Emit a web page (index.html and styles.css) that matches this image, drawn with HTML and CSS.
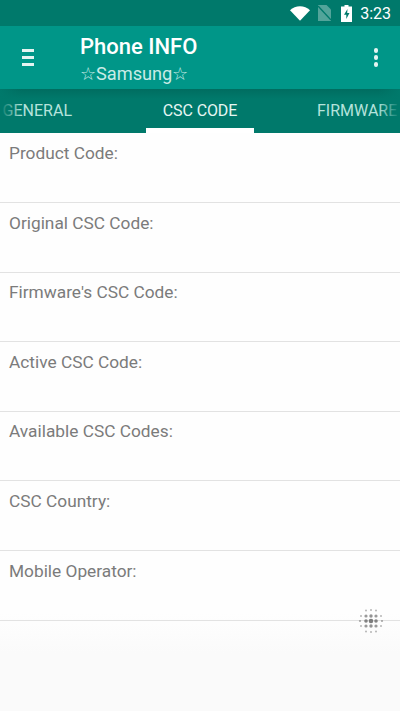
FILE: index.html
```html
<!DOCTYPE html>
<html lang="en">
<head>
  <meta charset="UTF-8">
  <meta name="viewport" content="width=device-width, initial-scale=1.0">
  <title>Phone INFO</title>
  <link rel="stylesheet" href="styles.css">
</head>
<body>
  <div class="status-bar">
    <svg class="icon-wifi" width="20" height="15" viewBox="0 0 20 15"><path d="M0 4.2C2.8 1.7 6.2.3 10 .3s7.2 1.4 10 3.9L10 14.8z" fill="#fff"/></svg>
    <svg class="icon-sim" width="13" height="16" viewBox="0 0 13 16"><path d="M0 0h8.500L13 4.500V16H0z" fill="#fff" fill-opacity=".32"/><path d="M0 1l13 14" stroke="#00796b" stroke-width="1.400"/></svg>
    <svg class="icon-battery" width="11" height="17" viewBox="0 0 11 17"><path fill-rule="evenodd" d="M3.500 0h4v1.500H11V17H0V1.500h3.500zM6.500 4L3 9.800h2.300V14L8.500 8H6.200z" fill="#fff"/></svg>
    <span class="clock">3:23</span>
  </div>

  <header class="app-bar">
    <button class="menu-btn" aria-label="Menu">
      <span></span><span></span><span></span>
    </button>
    <div class="titles">
      <h1>Phone INFO</h1>
      <p>☆Samsung☆</p>
    </div>
    <button class="more-btn" aria-label="More">
      <span></span><span></span><span></span>
    </button>
  </header>

  <nav class="tabs">
    <div class="tab tab-left">GENERAL</div>
    <div class="tab tab-active">CSC CODE</div>
    <div class="tab tab-right">FIRMWARE</div>
  </nav>

  <main class="list">
    <div class="row">Product Code:</div>
    <div class="row">Original CSC Code:</div>
    <div class="row">Firmware's CSC Code:</div>
    <div class="row">Active CSC Code:</div>
    <div class="row">Available CSC Codes:</div>
    <div class="row">CSC Country:</div>
    <div class="row">Mobile Operator:</div>
  </main>

  <svg class="spinner" width="26" height="26" viewBox="0 0 26 26" fill="#6f6f6f">
    <circle cx="8" cy="2.500" r="1" opacity=".5"/><circle cx="13" cy="2" r="1" opacity=".5"/><circle cx="18" cy="2.500" r="1" opacity=".5"/>
    <circle cx="3" cy="8" r="1" opacity=".5"/><circle cx="8" cy="8" r="1.600" opacity=".7"/><circle cx="13" cy="8" r="1.700" opacity=".75"/><circle cx="18" cy="8" r="1.600" opacity=".7"/><circle cx="23" cy="8" r="1" opacity=".5"/>
    <circle cx="2" cy="13" r="1.100" opacity=".6"/><circle cx="8" cy="13" r="1.800" opacity=".85"/><circle cx="13" cy="13" r="2.300" opacity=".9"/><circle cx="18" cy="13" r="1.800" opacity=".85"/><circle cx="24" cy="13" r="1.100" opacity=".6"/>
    <circle cx="3" cy="18" r="1" opacity=".5"/><circle cx="8" cy="18" r="1.600" opacity=".7"/><circle cx="13" cy="18" r="1.700" opacity=".75"/><circle cx="18" cy="18" r="1.600" opacity=".7"/><circle cx="23" cy="18" r="1" opacity=".5"/>
    <circle cx="8" cy="23.500" r="1" opacity=".5"/><circle cx="13" cy="24" r="1" opacity=".5"/><circle cx="18" cy="23.500" r="1" opacity=".5"/>
  </svg>
</body>
</html>
```

FILE: styles.css
```css
* { box-sizing: border-box; margin: 0; padding: 0; }
html, body { height: 100%; overflow: hidden; }
body {
  position: relative;
  display: flex;
  flex-direction: column;
  font-family: Roboto, sans-serif;
  background: #fafafa;
}
button { background: none; border: none; }

.status-bar {
  height: 26px;
  flex: none;
  display: flex;
  align-items: center;
  justify-content: flex-end;
  padding-right: 9px;
  background: #00796b;
}
.icon-wifi { margin-right: 8px; }
.icon-sim { margin-right: 10px; }
.icon-battery { margin-right: 8px; }
.clock { font-size: 16px; color: #fff; }

.app-bar {
  height: 63px;
  flex: none;
  display: flex;
  align-items: center;
  background: #009688;
}
.menu-btn {
  width: 80px;
  flex: none;
  display: flex;
  flex-direction: column;
  gap: 4px;
  padding-left: 22px;
}
.menu-btn span { display: block; width: 12px; height: 3px; background: #e4f4f1; }
.titles { flex: 1; padding-top: 4px; }
h1 { font-size: 22px; font-weight: 500; line-height: 29px; color: #fff; }
.titles p { font-size: 18.200px; line-height: 26px; color: #c9ebe6; }
.more-btn {
  width: 48px;
  flex: none;
  display: flex;
  flex-direction: column;
  align-items: center;
  gap: 2.500px;
}
.more-btn span { width: 4.500px; height: 4.500px; border-radius: 50%; background: #e4f4f1; }

.tabs {
  height: 44px;
  flex: none;
  display: flex;
  background: linear-gradient(#006d60, #00796b 10px);
}
.tab {
  position: relative;
  height: 44px;
  font-size: 16px;
  line-height: 43px;
  white-space: nowrap;
  overflow: hidden;
  color: #b5e3dc;
}
.tab-left { width: 146px; flex: none; text-align: right; padding-right: 74px; }
.tab-active { width: 108px; flex: none; text-align: center; color: #e6f6f3; border-bottom: 5px solid #fff; letter-spacing: -.1px; }
.tab-right { flex: 1; padding-left: 63px; }
.tab-left::after, .tab-right::after {
  content: "";
  position: absolute;
  top: 0;
  bottom: 0;
  width: 22px;
}
.tab-left::after { left: 0; background: linear-gradient(to right, #00796b, rgba(0,121,107,0)); }
.tab-right::after { right: 0; background: linear-gradient(to left, #00796b, rgba(0,121,107,0)); }

.list { flex: 1; padding-top: .5px; background: linear-gradient(#fefefe 480px, #fafafa 520px); }
.row {
  height: 69.600px;
  padding: 10.500px 9px 0;
  font-size: 17.300px;
  line-height: 19px;
  color: #7b7b7b;
  border-bottom: 1px solid #e2e2e2;
}

.spinner { position: absolute; left: 358px; top: 608px; }
```
